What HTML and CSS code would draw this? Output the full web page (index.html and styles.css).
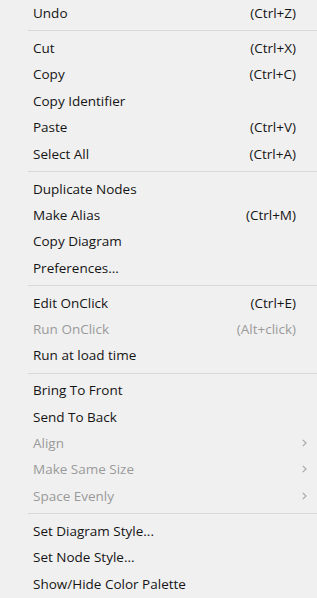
FILE: index.html
```html
<!DOCTYPE html>
<html lang="en">
<head>
    <meta charset="UTF-8">
    <meta name="viewport" content="width=device-width, initial-scale=1.0">
    <title>Context menu</title>
    <link rel="stylesheet" href="styles.css">
</head>
<body>
    <ul class="menu">
        <li class="item"><span class="label">Undo</span><span class="key">(Ctrl+Z)</span></li>
        <li class="sep"></li>
        <li class="item"><span class="label">Cut</span><span class="key">(Ctrl+X)</span></li>
        <li class="item"><span class="label">Copy</span><span class="key">(Ctrl+C)</span></li>
        <li class="item"><span class="label">Copy Identifier</span></li>
        <li class="item"><span class="label">Paste</span><span class="key">(Ctrl+V)</span></li>
        <li class="item"><span class="label">Select All</span><span class="key">(Ctrl+A)</span></li>
        <li class="sep"></li>
        <li class="item"><span class="label">Duplicate Nodes</span></li>
        <li class="item"><span class="label">Make Alias</span><span class="key">(Ctrl+M)</span></li>
        <li class="item"><span class="label">Copy Diagram</span></li>
        <li class="item"><span class="label">Preferences...</span></li>
        <li class="sep"></li>
        <li class="item"><span class="label">Edit OnClick</span><span class="key">(Ctrl+E)</span></li>
        <li class="item disabled"><span class="label">Run OnClick</span><span class="key">(Alt+click)</span></li>
        <li class="item"><span class="label">Run at load time</span></li>
        <li class="sep"></li>
        <li class="item"><span class="label">Bring To Front</span></li>
        <li class="item"><span class="label">Send To Back</span></li>
        <li class="item disabled"><span class="label">Align</span><span class="arrow"><svg width="5" height="8" viewBox="0 0 5 8"><path d="M0.8 0.8 L4 4 L0.8 7.2" fill="none" stroke="#a8a8a8" stroke-width="1.2"/></svg></span></li>
        <li class="item disabled"><span class="label">Make Same Size</span><span class="arrow"><svg width="5" height="8" viewBox="0 0 5 8"><path d="M0.8 0.8 L4 4 L0.8 7.2" fill="none" stroke="#a8a8a8" stroke-width="1.2"/></svg></span></li>
        <li class="item disabled"><span class="label">Space Evenly</span><span class="arrow"><svg width="5" height="8" viewBox="0 0 5 8"><path d="M0.8 0.8 L4 4 L0.8 7.2" fill="none" stroke="#a8a8a8" stroke-width="1.2"/></svg></span></li>
        <li class="sep"></li>
        <li class="item"><span class="label">Set Diagram Style...</span></li>
        <li class="item"><span class="label">Set Node Style...</span></li>
        <li class="item"><span class="label">Show/Hide Color Palette</span></li>
    </ul>
</body>
</html>
```

FILE: styles.css
```css
*{
    padding: 0;
    margin: 0;
    box-sizing: border-box;
}
ul, li{
    list-style: none;
}
body{
    background-color: #f0f0f0;
    font-family: "Open Sans", "Noto Sans", sans-serif;
    font-size: 13.5px;
    font-weight: 500;
    color: #151515;
}
.menu{
    width: 317px;
    height: 598px;
    overflow: hidden;
    background-color: #f0f0f0;
}
.item{
    height: 26.4px;
    display: grid;
    grid-template-columns: 1fr auto 21px;
    align-items: center;
    padding-left: 33px;
    white-space: nowrap;
}
.item .label{
    grid-column: 1;
}
.item .key{
    grid-column: 2;
}
.item .arrow{
    grid-column: 3;
    display: flex;
    align-items: center;
    padding-left: 6px;
}
.item.disabled{
    color: #9a9a9a;
}
.sep{
    height: 1px;
    margin: 4px 0 3.5px 28px;
    background-color: #d9d9d9;
}
```
